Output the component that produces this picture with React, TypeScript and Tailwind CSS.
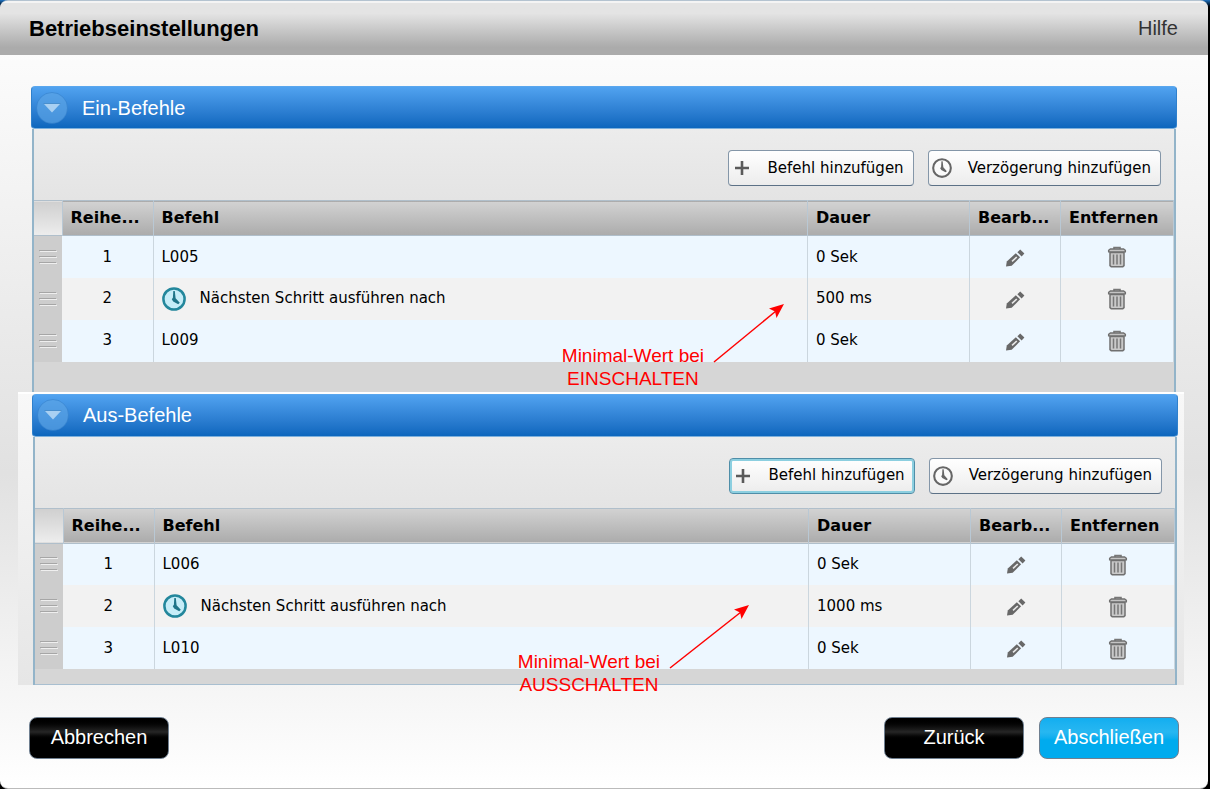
import { useState } from "react";
import clsx from "clsx";

interface Command {
  label: string;
  duration: string;
  isDelay?: boolean;
}

const ON_COMMANDS: Command[] = [
  { label: "L005", duration: "0 Sek" },
  { label: "Nächsten Schritt ausführen nach", duration: "500 ms", isDelay: true },
  { label: "L009", duration: "0 Sek" },
];

const OFF_COMMANDS: Command[] = [
  { label: "L006", duration: "0 Sek" },
  { label: "Nächsten Schritt ausführen nach", duration: "1000 ms", isDelay: true },
  { label: "L010", duration: "0 Sek" },
];

function PlusIcon() {
  return (
    <svg width="20" height="20" viewBox="0 0 20 20" aria-hidden="true">
      <path d="M10 3v14M3 10h14" stroke="#5a5a5a" strokeWidth="2.6" />
    </svg>
  );
}

function ClockIcon({ size, stroke, fill, hand }: { size: number; stroke: string; fill: string; hand: string }) {
  return (
    <svg width={size} height={size} viewBox="0 0 24 24" className="shrink-0" aria-hidden="true">
      <circle cx="12" cy="12" r="10.6" fill={fill} stroke={stroke} strokeWidth="2.5" />
      <path d="M11.3 4h1.5l.8 7.200 4.200 4.600-1.600 1.400-5-2.700-1.400-2.200 1.100-1.600z" fill={hand} />
    </svg>
  );
}

function PencilIcon() {
  return (
    <svg width="20" height="20" viewBox="0 0 20 20" aria-hidden="true">
      <path d="M1 18.5l.8-5L10.8 5.2l4.300 4.100-8.400 8.400z" fill="#686868" />
      <path d="M6.500 12.800l4.700-4.400 1.200 1.100-4.800 4.500z" fill="#e8e8e8" />
      <path d="M12.400 4.200l2.800-2.600 4.200 4-2.800 2.800z" fill="#686868" />
    </svg>
  );
}

function TrashIcon() {
  return (
    <svg width="20" height="22" viewBox="0 0 20 22" fill="none" aria-hidden="true">
      <path d="M7 3V1.600h6V3" stroke="#777" strokeWidth="1.600" />
      <path d="M1.600 5.800V4.400L3.400 3h13.200l1.800 1.400v1.400z" fill="#c4c4c4" stroke="#707070" strokeWidth="1.300" />
      <path d="M3 6.500h14v13.200l-1.200 1H4.200L3 19.700z" fill="#c9c9c9" stroke="#707070" strokeWidth="1.500" />
      <path d="M6.500 8.500v10M10 8.500v10M13.500 8.500v10" stroke="#777" strokeWidth="1.500" />
    </svg>
  );
}

function DragHandle() {
  return (
    <svg width="18" height="16" viewBox="0 0 18 16" className="mx-auto block" aria-hidden="true">
      <path d="M0 1.500h17M0 7.500h17M0 13.500h17" stroke="#a6a6a6" />
      <path d="M1 2.500h17M1 8.500h17M1 14.500h17" stroke="#efefef" />
    </svg>
  );
}

function CollapseIcon({ open }: { open: boolean }) {
  return (
    <svg width="32" height="32" viewBox="0 0 32 32" className={clsx(!open && "-rotate-90")} aria-hidden="true">
      <circle cx="16" cy="16" r="15.500" fill="#5ba4e6" fillOpacity="0.7" stroke="#2f7cc8" strokeOpacity="0.5" />
      <path d="M8 12h16l-8 8.500z" fill="#a9d0f2" />
      <path d="M7.500 11.500h17" stroke="#4a8fcd" />
    </svg>
  );
}

interface NoteProps {
  lines: [string, string];
  arrowWidth: number;
  arrowHeight: number;
  className: string;
}

function Note({ lines, arrowWidth: w, arrowHeight: h, className }: NoteProps) {
  return (
    <div className={clsx("pointer-events-none absolute flex items-end gap-1.5 text-[#f00]", className)}>
      <p className="text-center text-[19px] leading-[23px] whitespace-nowrap">
        {lines[0]}
        <br />
        {lines[1]}
      </p>
      <svg width={w} height={h} viewBox={`0 0 ${w} ${h}`} className="mb-[25px]" aria-hidden="true">
        <path d={`M4 ${h - 3}L${w - 12} 10`} stroke="currentColor" strokeWidth="1.5" />
        <path d={`M${w - 4} 3l-15 4.500 6 3 1.500 6.500z`} fill="currentColor" />
      </svg>
    </div>
  );
}

const TH = "border-r border-[#b9c8d4] px-2 text-left text-base font-bold whitespace-nowrap";
const TD = "border-r border-[#cbd6de] px-2 whitespace-nowrap";
const TOOL_BUTTON =
  "flex h-9 items-center gap-4 rounded border bg-linear-to-b from-white to-[#ececec] pr-[9px] pl-[3px] text-[15px] text-black";

interface PanelProps {
  title: string;
  commands: Command[];
  active?: boolean;
  footer: string;
}

function CommandPanel({ title, commands, active, footer }: PanelProps) {
  const [open, setOpen] = useState(true);

  return (
    <section>
      <h2>
        <button
          type="button"
          aria-expanded={open}
          onClick={() => setOpen(!open)}
          className="flex h-[43px] w-full items-center gap-3.5 rounded-sm border border-[#2f80cc] border-t-[#5aa7ee] border-b-[#7db0dc] bg-linear-to-b from-[#51a3f0] to-[#0c66bd] px-1 text-xl text-white"
        >
          <CollapseIcon open={open} />
          {title}
        </button>
      </h2>

      {open && (
        <div className="mx-px border-x-2 border-[#93b4c9] bg-[#d6d6d6] font-['DejaVu_Sans',sans-serif] text-[15px] text-black">
          <div className="flex justify-end gap-3.5 bg-linear-to-b from-[#ececec] to-[#e4e4e4] pt-[21px] pr-[13px] pb-3.5">
            <button
              type="button"
              className={clsx(TOOL_BUTTON, active ? "border-[#4f8ea8] ring-2 ring-[#8ccfe0] ring-inset" : "border-[#8496a8] border-b-[#5c7186]")}
            >
              <PlusIcon />
              Befehl hinzufügen
            </button>
            <button type="button" className={clsx(TOOL_BUTTON, "border-[#8496a8] border-b-[#5c7186]")}>
              <ClockIcon size={20} stroke="#666" fill="#fafafa" hand="#666" />
              Verzögerung hinzufügen
            </button>
          </div>

          <table className="w-full table-fixed border-collapse">
            <colgroup>
              <col className="w-7" />
              <col className="w-[91px]" />
              <col />
              <col className="w-[162px]" />
              <col className="w-[91px]" />
              <col className="w-[113px]" />
            </colgroup>
            <thead>
              <tr className="h-[35px] border-y border-[#b0bfcb] bg-linear-to-b from-[#d2d2d2] to-[#acacac]">
                <th aria-label="Sortieren" className="border-r border-[#b9c8d4] bg-linear-to-b from-[#cfcfcf] to-[#ededed]" />
                <th className={TH}>Reihe...</th>
                <th className={TH}>Befehl</th>
                <th className={TH}>Dauer</th>
                <th className={TH}>Bearb...</th>
                <th className={TH}>Entfernen</th>
              </tr>
            </thead>
            <tbody>
              {commands.map((cmd, i) => (
                <tr key={i} className="h-[42px] bg-[#edf7ff] even:bg-[#f2f2f2]">
                  <td className="bg-[#cdcdcd]">
                    <DragHandle />
                  </td>
                  <td className={clsx(TD, "text-center")}>{i + 1}</td>
                  <td className={TD}>
                    {cmd.isDelay ? (
                      <span className="flex items-center gap-3.5">
                        <ClockIcon size={24} stroke="#23879c" fill="#c6edf8" hand="#1f7488" />
                        {cmd.label}
                      </span>
                    ) : (
                      cmd.label
                    )}
                  </td>
                  <td className={TD}>{cmd.duration}</td>
                  <td className={TD}>
                    <button type="button" aria-label="Bearbeiten" className="mx-auto block pt-0.5">
                      <PencilIcon />
                    </button>
                  </td>
                  <td className={TD}>
                    <button type="button" aria-label="Entfernen" className="mx-auto block pt-px">
                      <TrashIcon />
                    </button>
                  </td>
                </tr>
              ))}
            </tbody>
          </table>
          <div className={footer} />
        </div>
      )}
    </section>
  );
}

const NAV_BUTTON = "h-[42px] w-[140px] rounded-lg border border-[#6f7f90] pb-0.5 text-xl text-white";
const NAV_DARK = "bg-linear-to-b from-black via-[#262626] via-35% to-black to-55%";

export default function App() {
  return (
    <div className="flex min-h-screen flex-col bg-linear-to-b from-[#1f74c4] to-black to-1% pr-0.5 font-['Liberation_Sans',Arial,sans-serif]">
      <div className="flex flex-1 flex-col overflow-hidden rounded-lg border-y border-t-[#b4c3d0] border-b-[#bbb] bg-linear-to-b from-white via-[#e1e1e1] via-60% to-white">
        <header className="flex h-[54px] items-center justify-between border-t-2 border-[#f4f4f4] bg-linear-to-b from-[#e4e4e4] from-20% to-[#ababab] to-85% pr-7 pb-0.5 pl-[29px]">
          <h1 className="text-[22px] font-bold text-black">Betriebseinstellungen</h1>
          <a href="#hilfe" className="mr-0.5 text-xl text-[#333]">
            Hilfe
          </a>
        </header>

        <main className="pt-[31px]">
          <div className="relative mr-[31px] ml-[31px]">
            <CommandPanel title="Ein-Befehle" commands={ON_COMMANDS} footer="h-[30px]" />
            <Note lines={["Minimal-Wert bei", "EINSCHALTEN"]} arrowWidth={78} arrowHeight={64} className="right-[389px] bottom-0.5" />
          </div>

          <div className="relative mr-6 ml-[18px] border-t-2 border-white bg-linear-to-b from-[#f8f8f8] to-[#e6e6e6] pr-1.5 pl-3.5">
            <CommandPanel title="Aus-Befehle" commands={OFF_COMMANDS} active footer="h-4 border-b border-[#a9bfd0]" />
            <Note lines={["Minimal-Wert bei", "AUSSCHALTEN"]} arrowWidth={87} arrowHeight={69} className="right-[431px] -bottom-[11px]" />
          </div>
        </main>

        <footer className="mt-auto flex gap-[15px] pr-[29px] pb-[29px] pl-[29px]">
          <button type="button" className={clsx(NAV_BUTTON, NAV_DARK, "mr-auto")}>
            Abbrechen
          </button>
          <button type="button" className={clsx(NAV_BUTTON, NAV_DARK)}>
            Zurück
          </button>
          <button
            type="button"
            className={clsx(NAV_BUTTON, "bg-linear-to-b from-[#12aef0] via-[#27b7f1] via-35% to-[#00abee] to-55%")}
          >
            Abschließen
          </button>
        </footer>
      </div>
    </div>
  );
}
